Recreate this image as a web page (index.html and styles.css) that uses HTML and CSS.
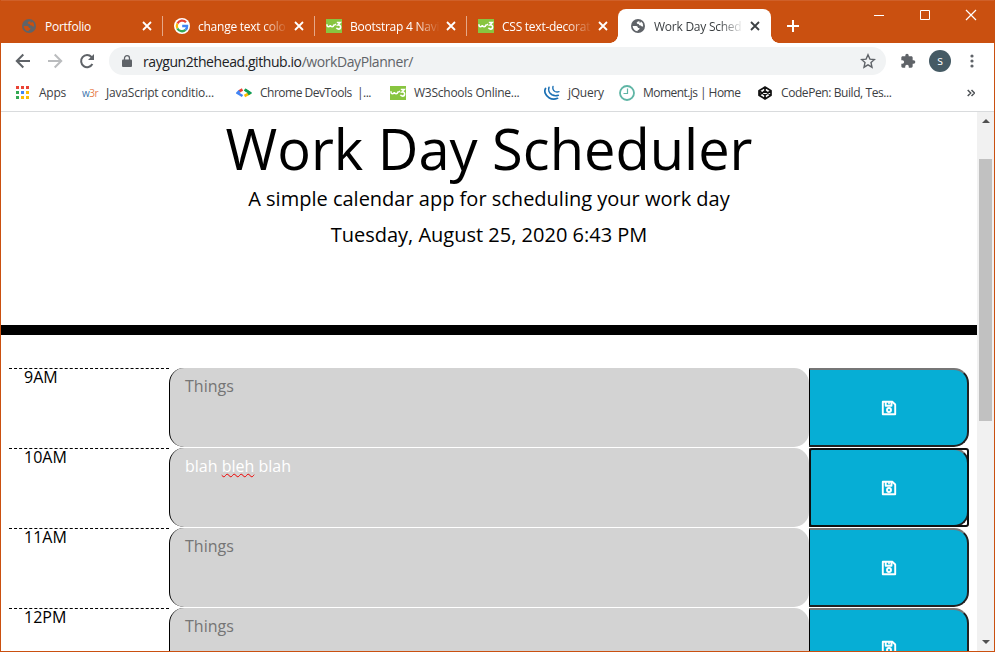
FILE: index.html
```html
<!DOCTYPE html>
<html lang="en">
<head>
<meta charset="utf-8">
<title>Work Day Scheduler</title>
<link rel="stylesheet" href="styles.css">
</head>
<body>
<svg class="defs" width="0" height="0">
  <symbol id="globe" viewBox="0 0 16 16"><circle cx="8" cy="8" r="7" fill="#5f6368"/><path d="M2.600 8 L6.500 8 Q8 8.300 8 10 L9.600 10 Q9.500 12 7.800 12.200 L7.400 13.300 Q3.200 12.600 2.600 8Z M9.400 2.900 Q7 3.300 6.600 4.800 Q7 6.200 8.600 6 Q9.200 7.700 10.800 7.500 Q11.700 8.900 13.200 8.300 Q13.300 4.800 11 3.500 L10.400 4.800 L9.400 4.600Z" fill="currentColor"/></symbol>
  <symbol id="w3" viewBox="0 0 16 16"><path d="M0 1h16v14H0z" fill="#88c540"/><path d="M1 6.300v1q0 1.500 1.500 1.500t1.800-1.700q.3 1.700 1.800 1.700t1.600-1.500q1.300 0 2.300-1.200" fill="none" stroke="#fff" stroke-width="1.500"/><path d="M10.800 4.500h3.500L12 7q2.600-.2 2.600 1.900t-2 2.200q-1.600 0-2.100-1.300" fill="none" stroke="#fff" stroke-width="1.600"/></symbol>
  <symbol id="close" viewBox="0 0 10 10"><path d="M1 1l8 8M9 1L1 9" stroke="currentColor" stroke-width="1.800"/></symbol>
  <symbol id="floppy" viewBox="0 0 16 16"><path d="M1.800 1.800h9.700l2.700 2.700v9.700H1.800zM4.700 2v3.700h5.800V2" fill="none" stroke="#fff" stroke-width="1.900" stroke-linejoin="round"/><circle cx="8" cy="10" r="2" fill="none" stroke="#fff" stroke-width="1.900"/><path d="M7.200 2h1.600v2.300H7.200z" fill="#fff"/></symbol>
</svg>
<div class="window">
  <div class="tabstrip">
    <div class="tab first"><svg class="fav dark"><use href="#globe"/></svg><span class="title">Portfolio</span><svg class="close"><use href="#close"/></svg></div>
    <div class="tab"><svg class="fav" viewBox="0 0 16 16"><circle cx="8" cy="8" r="8" fill="#fff"/><g fill="none" stroke-width="2.300"><path d="M12 4.300A5.200 5.200 0 0 0 3.400 5.600" stroke="#ea4335"/><path d="M3.400 5.600A5.200 5.200 0 0 0 3.400 10.400" stroke="#fbbc05"/><path d="M3.400 10.400A5.200 5.200 0 0 0 11.500 11.900" stroke="#34a853"/><path d="M11.500 11.900Q13.300 10.300 13.100 8H8.200" stroke="#4285f4"/></g></svg><span class="title fade">change text colo</span><svg class="close"><use href="#close"/></svg></div>
    <div class="tab"><svg class="fav"><use href="#w3"/></svg><span class="title fade">Bootstrap 4 Navi</span><svg class="close"><use href="#close"/></svg></div>
    <div class="tab last"><svg class="fav"><use href="#w3"/></svg><span class="title fade">CSS text-decorat</span><svg class="close"><use href="#close"/></svg></div>
    <div class="tab active"><svg class="fav"><use href="#globe"/></svg><span class="title fade">Work Day Sched</span><svg class="close"><use href="#close"/></svg></div>
    <svg class="plus" viewBox="0 0 12 12"><path d="M6 0v12M0 6h12" stroke="#fff" stroke-width="2"/></svg>
    <div class="controls">
      <svg viewBox="0 0 12 12"><path d="M1 6.500h10" stroke="#fff"/></svg>
      <svg viewBox="0 0 12 12"><path d="M1.500 1.500h9v9h-9z" fill="none" stroke="#fff"/></svg>
      <svg viewBox="0 0 12 12"><path d="M1 1l10 10M11 1L1 11" stroke="#fff" stroke-width="1.200"/></svg>
    </div>
  </div>
  <div class="toolbar">
    <svg class="nav" viewBox="0 0 16 16"><path d="M15 8H2M8.300 1.500L1.800 8l6.500 6.500" fill="none" stroke="#5f6368" stroke-width="2"/></svg>
    <svg class="nav" viewBox="0 0 16 16"><path d="M1 8h13M7.700 1.500L14.200 8l-6.500 6.500" fill="none" stroke="#babcbe" stroke-width="2"/></svg>
    <svg class="nav" viewBox="0 0 16 16"><path d="M13.400 11A6 6 0 1 1 12.500 4L14 5.600" fill="none" stroke="#5f6368" stroke-width="2"/><path d="M15 1v6H9z" fill="#5f6368"/></svg>
    <div class="omnibox">
      <svg class="lock" viewBox="0 0 10 12"><path d="M1 4.500h8q1 0 1 1V11q0 1-1 1H1q-1 0-1-1V5.500q0-1 1-1z" fill="#5f6368"/><path d="M2.500 5V3.200a2.500 2.500 0 0 1 5 0V5" fill="none" stroke="#5f6368" stroke-width="1.300"/></svg>
      <span class="url">raygun2thehead.github.io<span>/workDayPlanner/</span></span>
      <svg class="star" viewBox="0 0 16 16"><path d="M8 1.800l1.900 4.300 4.600.4-3.500 3.100 1 4.600-4-2.400-4 2.400 1-4.600-3.500-3.100 4.600-.4z" fill="none" stroke="#5f6368" stroke-width="1.400"/></svg>
    </div>
    <svg class="puzzle" viewBox="0 0 24 24"><path d="M20.500 11H19V7c0-1.100-.9-2-2-2h-4V3.500a2.500 2.500 0 0 0-5 0V5H4c-1.100 0-2 .9-2 2v3.800h1.500a2.700 2.700 0 0 1 0 5.400H2V20c0 1.100.9 2 2 2h3.800v-1.500a2.700 2.700 0 0 1 5.400 0V22H17c1.100 0 2-.9 2-2v-4h1.500a2.500 2.500 0 0 0 0-5z" fill="#5f6368"/></svg>
    <span class="avatar">s</span>
    <svg class="dots" viewBox="0 0 4 14"><circle cx="2" cy="2" r="1.600"/><circle cx="2" cy="7" r="1.600"/><circle cx="2" cy="12" r="1.600"/></svg>
  </div>
  <div class="bookmarks">
    <div class="bm b-apps"><svg viewBox="0 0 16 16"><path d="M1 1h3v3H1zM6 1h3v3H6zM11 1h3v3h-3z" fill="#ea4335"/><path d="M1 6h3v3H1zM1 11h3v3H1z" fill="#34a853"/><path d="M6 6h3v3H6z" fill="#4285f4"/><path d="M11 6h3v3h-3zM6 11h3v3H6zM11 11h3v3h-3z" fill="#fbbc05"/></svg><span>Apps</span></div>
    <div class="bm b-js"><b class="w3r">w<i>3r</i></b><span>JavaScript conditio...</span></div>
    <div class="bm b-dev"><svg viewBox="0 0 16 16"><g fill="none" stroke-width="2.600"><path d="M6.500 4.500L3 6.500" stroke="#ea4335"/><path d="M3.500 6L1.500 8l5 3" stroke="#4285f4"/><path d="M8.500 4.500L14 8" stroke="#34a853"/><path d="M14 8l-5.500 3" stroke="#fbbc05"/><path d="M9 4.700L14 8l-2 1.200" stroke="#0f9d58"/></g></svg><span>Chrome DevTools&nbsp; |...</span></div>
    <div class="bm b-w3"><svg><use href="#w3"/></svg><span>W3Schools Online...</span></div>
    <div class="bm b-jq"><svg viewBox="0 0 16 16"><g fill="none" stroke="#1b70b4" stroke-linecap="round"><path stroke-width="1.700" d="M1.500 3.500C-.2 6.500 1.500 10.500 5 12.700q4 2.500 8.500.6"/><path stroke-width="1.600" d="M5 2.300C4 5 5.200 8.200 8 9.800q3 1.600 6.300.4"/><path stroke-width="1.400" d="M9 1.500C8.500 3.500 9.300 5.500 11 6.500q1.900 1 4 .2"/></g></svg><span>jQuery</span></div>
    <div class="bm b-mo"><svg viewBox="0 0 16 16"><circle cx="8" cy="8" r="7" fill="#fff" stroke="#5fb5a5" stroke-width="1.800"/><path d="M8.500 3.500v5h-4" fill="none" stroke="#5fb5a5" stroke-width="1.200"/></svg><span>Moment.js | Home</span></div>
    <div class="bm b-cp"><svg viewBox="0 0 16 16"><path d="M8 2l6 3.800v4.400L8 14l-6-3.800V5.800zM8 2v4M8 10v4M2 5.800l6 4.200 6-4.200M2 10.200L8 6l6 4.200" fill="none" stroke="#111" stroke-width="1.700" stroke-linejoin="round"/></svg><span>CodePen: Build, Tes...</span></div>
    <svg class="more" viewBox="0 0 8 8"><path d="M.7 1l3 3-3 3M4.500 1l3 3-3 3" fill="none" stroke="#4f5357" stroke-width="1.500"/></svg>
  </div>
  <div class="viewport">
    <main class="page">
      <header>
        <h1>Work Day Scheduler</h1>
        <p>A simple calendar app for scheduling your work day</p>
        <p>Tuesday, August 25, 2020 6:43 PM</p>
      </header>
      <section class="planner">
        <div class="row"><div class="hour">9AM</div><div class="entry">Things</div><button class="save"><svg><use href="#floppy"/></svg></button></div>
        <div class="row"><div class="hour">10AM</div><div class="entry filled">blah <u>bleh</u> blah</div><div class="focus"><button class="save"><svg><use href="#floppy"/></svg></button></div></div>
        <div class="row"><div class="hour">11AM</div><div class="entry">Things</div><button class="save"><svg><use href="#floppy"/></svg></button></div>
        <div class="row"><div class="hour">12PM</div><div class="entry">Things</div><button class="save"><svg><use href="#floppy"/></svg></button></div>
      </section>
    </main>
    <div class="scrollbar"><svg viewBox="0 0 8 4"><path d="M0 4l4-4 4 4z"/></svg><div class="thumb"></div><svg class="down" viewBox="0 0 8 4"><path d="M0 0l4 4 4-4z"/></svg></div>
  </div>
</div>
</body>
</html>
```
FILE: styles.css
```css
* { box-sizing: border-box; }
body { margin: 0; font-family: "Open Sans", sans-serif; overflow: hidden; }
svg { display: block; flex: none; }
.defs { position: absolute; }
.window { width: 995px; height: 652px; border: 1px solid #ca5010; border-top: 0; display: flex; flex-direction: column; background: #fff; overflow: hidden; }

.tabstrip { height: 43px; flex: none; background: #ca5010; border-top: 1px solid #cf6029; padding: 8px 0 0 10px; display: flex; }
.tab { width: 152px; height: 34px; display: flex; align-items: center; padding-left: 11px; color: #fff; position: relative; }
.tab.first { padding-left: 10px; }
.tab.first .close { margin-left: 7px; }
.tab::after { content: ""; position: absolute; right: 0; top: 7px; width: 1px; height: 20px; background: #e5a888; }
.tab.last::after { display: none; }
.fav { width: 16px; height: 16px; color: #fff; }
.fav.dark { color: #ca5010; }
.title { width: 90px; margin-left: 8px; font-size: 12px; letter-spacing: -.25px; white-space: nowrap; }
.fade { -webkit-mask-image: linear-gradient(90deg, #000 72%, transparent); mask-image: linear-gradient(90deg, #000 72%, transparent); }
.close { width: 10px; height: 10px; margin-left: 6px; }
.active { background: #fff; width: 153px; margin-left: -1px; padding-left: 12px; border-radius: 8px 8px 0 0; color: #3c4043; }
.active::before, .active::after { content: ""; position: absolute; top: auto; bottom: 0; width: 8px; height: 8px; }
.active::before { left: -8px; background: radial-gradient(circle at 0 0, #ca5010 7.5px, #fff 8px); }
.active::after { right: -8px; background: radial-gradient(circle at 100% 0, #ca5010 7.5px, #fff 8px); }
.plus { width: 12px; height: 12px; margin: 11px 0 0 16px; }
.controls { display: flex; gap: 34px; margin: 0 17px 0 auto; }
.controls svg { width: 12px; height: 12px; }

.toolbar { height: 36px; flex: none; display: flex; align-items: center; padding-left: 14px; }
.nav { width: 16px; height: 16px; margin-right: 16px; }
.omnibox { width: 777px; height: 28px; margin-left: -2px; border-radius: 14px; background: #f1f3f4; display: flex; align-items: center; padding: 0 10px 0 13px; }
.lock { width: 10px; height: 12px; }
.url { margin-left: 11px; font-size: 14px; letter-spacing: -.42px; color: #202124; }
.url span { color: #5f6368; }
.star { width: 16px; height: 16px; margin-left: auto; }
.puzzle { width: 16px; height: 16px; margin-left: 14px; }
.avatar { width: 22px; height: 22px; margin-left: 13px; border-radius: 50%; background: #455a64; color: #fff; font-size: 12px; line-height: 21px; text-align: center; }
.dots { width: 4px; height: 14px; margin-left: 19px; fill: #5f6368; }

.bookmarks { height: 33px; flex: none; display: flex; padding: 0 0 5px 14px; align-items: center; border-bottom: 1px solid #d9dbdd; }
.bm { display: flex; align-items: center; flex: none; font-size: 12px; color: #3c4043; letter-spacing: -.25px; white-space: nowrap; }
.bm svg { width: 16px; height: 16px; }
.bm span { margin-left: 8px; }
.w3r { width: 16px; font: 10px "Open Sans", sans-serif; letter-spacing: -.5px; color: #3973ac; }
.w3r i { font-style: normal; color: #e8804c; }
.b-apps { width: 67px; }
.b-js { width: 154px; letter-spacing: -.2px; }
.b-dev { width: 154px; letter-spacing: -.5px; }
.b-w3 { width: 154px; }
.b-jq { width: 75px; }
.b-mo { width: 138px; letter-spacing: -.55px; }
.b-cp { letter-spacing: -.42px; }
.more { width: 8px; height: 8px; margin: 0 19px 0 auto; }

.viewport { flex: 1; min-height: 0; display: flex; }
.page { width: 976px; overflow: hidden; }
header { height: 223px; border-bottom: 10px solid #000; text-align: center; color: #000; }
h1 { margin: 0; padding-top: 3px; font-size: 56px; font-weight: 400; line-height: 67px; }
p { margin: 0; font-size: 20px; line-height: 30px; padding-top: 2px; }
p + p { padding-top: 6px; }
.planner { padding: 33px 8px 0; }
.row { height: 80px; display: grid; grid-template-columns: 160px 640px 160px; }
.hour { border-top: 1px dashed #000; padding-left: 15px; font-size: 16px; line-height: 16px; }
.entry { height: 79px; background: #d3d3d3; border-left: 1px solid #000; border-radius: 15px; padding: 6px 15px; font-size: 16px; line-height: 24px; color: #757575; }
.filled { color: #fff; }
.entry u { text-decoration: underline wavy #e00 1px; text-underline-offset: 1px; text-decoration-skip-ink: none; }
.save { width: 160px; height: 79px; padding: 0; border: 2px solid #212121; border-top-color: #767676; border-left: 1px solid #000; border-radius: 0 15px 15px 0; background: #06aed5; display: flex; align-items: center; justify-content: center; }
.save svg { width: 16px; height: 16px; }
.focus { width: 160px; height: 79px; border-radius: 3px; position: relative; }
.focus::after { content: ""; position: absolute; inset: 0; border: 2px solid #101010; border-radius: 3px; }
.scrollbar { width: 17px; background: #f1f1f1; display: flex; flex-direction: column; align-items: center; padding: 7px 0; }
.scrollbar svg { width: 8px; height: 4px; fill: #505050; }
.thumb { width: 13px; height: 262px; margin-top: 36px; background: #c1c1c1; }
.down { margin-top: auto; }
```
